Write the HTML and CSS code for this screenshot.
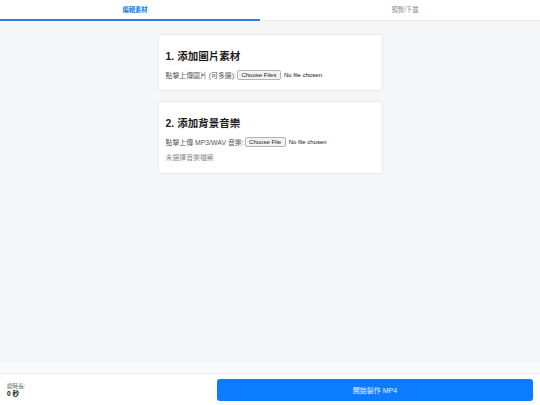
FILE: index.html
```html
<!DOCTYPE html>
<html lang="zh-Hant">
<head>
<meta charset="utf-8">
<title>編輯素材</title>
<link rel="stylesheet" href="styles.css">
</head>
<body>
<div class="app">
  <nav class="tabs">
    <div class="tab active">編輯素材</div>
    <div class="tab">預覽/下載</div>
  </nav>
  <main class="main">
    <section class="card">
      <h2 class="card-title">1. 添加圖片素材</h2>
      <div class="field">
        <span class="label">點擊上傳圖片 (可多選):</span>
        <input class="file" type="file" multiple>
      </div>
    </section>
    <section class="card">
      <h2 class="card-title">2. 添加背景音樂</h2>
      <div class="field">
        <span class="label">點擊上傳 MP3/WAV 音樂:</span>
        <input class="file" type="file">
      </div>
      <p class="status">未選擇音樂檔案</p>
    </section>
  </main>
  <div class="fade"></div>
  <footer class="footer">
    <div class="duration">
      <div class="duration-label">總時長:</div>
      <div class="duration-value">0 秒</div>
    </div>
    <button class="primary">開始製作 MP4</button>
  </footer>
</div>
</body>
</html>
```

FILE: styles.css
```css
* { box-sizing: border-box; }
html, body { margin: 0; padding: 0; height: 100%; }
body {
  font-family: "Liberation Sans", "Noto Sans CJK TC", sans-serif;
  background: #f5f6f8;
  color: #222;
}
.app {
  display: flex;
  flex-direction: column;
  height: 100vh;
}
.tabs {
  display: flex;
  background: #fff;
  border-bottom: 1px solid #e6e7ea;
  height: 21px;
  flex: 0 0 auto;
}
.tab {
  flex: 1 1 0;
  display: flex;
  align-items: center;
  justify-content: center;
  font-size: 6.3px;
  color: #8a8a8a;
  position: relative;
  padding-bottom: 2px;
}
.tab.active {
  color: #1a7be0;
  font-weight: bold;
}
.tab.active::after {
  content: "";
  position: absolute;
  left: 0;
  right: 10px;
  bottom: -1px;
  height: 2px;
  background: #2a7fd8;
}
.main {
  flex: 1 1 auto;
  display: flex;
  flex-direction: column;
  align-items: center;
  gap: 10px;
  padding-top: 13px;
}
.card {
  width: 225px;
  background: #fff;
  border: 1px solid #e9eaed;
  border-radius: 3px;
  padding: 7px 7px 9px;
}
.card-title {
  font-size: 10.5px;
  font-weight: bold;
  margin: 8px 0 6px;
  line-height: 13px;
  color: #1c1c1c;
}
.field {
  display: flex;
  align-items: center;
  gap: 1px;
  height: 12px;
}
.label {
  font-size: 6.9px;
  color: #555;
  white-space: nowrap;
}
.file {
  font-family: "Liberation Sans", sans-serif;
  font-size: 12px;
  zoom: 0.5;
  color: #111;
}
.file::file-selector-button {
  font-family: "Liberation Sans", sans-serif;
  font-size: 12px;
  padding: 2px 7px;
  margin-right: 6px;
  border: 1px solid #b4b4b4;
  border-radius: 4px;
  background: #f2f2f2;
  color: #222;
}
.status {
  font-size: 6.9px;
  color: #8c8c8c;
  margin: 5px 0 2px;
  line-height: 9px;
}
.fade {
  flex: 0 0 12px;
  background: #f9fafb;
  border-bottom: 1px solid #ebecef;
}
.footer {
  flex: 0 0 31px;
  background: #fff;
  display: flex;
  align-items: center;
  justify-content: space-between;
  padding: 5px 7px 4px;
}
.duration {
  display: flex;
  flex-direction: column;
  line-height: 7px;
}
.duration-label {
  font-size: 5.6px;
  color: #666;
}
.duration-value {
  font-size: 6.6px;
  font-weight: bold;
  color: #111;
}
.primary {
  width: 316px;
  height: 22px;
  border: none;
  border-radius: 3px;
  background: #0b7cff;
  color: #e8f1ff;
  font-family: "Liberation Sans", "Noto Sans CJK TC", sans-serif;
  font-size: 7px;
  padding: 0;
}
```
